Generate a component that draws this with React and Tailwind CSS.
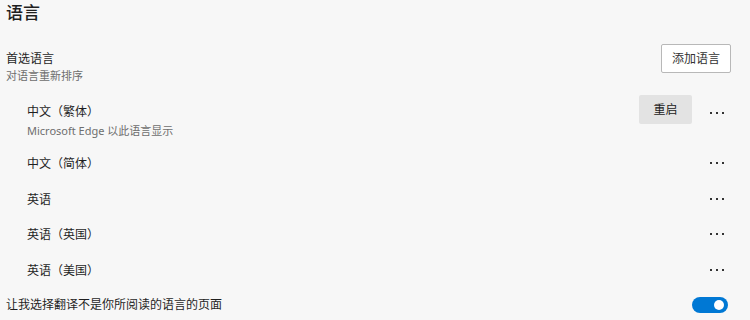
const FONT = "font-['Noto_Sans','Noto_Sans_CJK_SC',sans-serif]"

const LANGS = [
  { name: '中文（繁体）', sub: 'Microsoft Edge 以此语言显示', restart: true },
  { name: '中文（简体）' },
  { name: '英语' },
  { name: '英语（英国）' },
  { name: '英语（美国）' },
]

function Dots() {
  return (
    <button className="w-[30px] h-[20px] flex items-center justify-center gap-[4px]">
      <span className="w-[2px] h-[2px] bg-[#333]" />
      <span className="w-[2px] h-[2px] bg-[#333]" />
      <span className="w-[2px] h-[2px] bg-[#333]" />
    </button>
  )
}

export default function App() {
  return (
    <div className={`w-[750px] h-[320px] bg-[#f7f7f7] overflow-hidden text-[#1f1f1f] ${FONT}`}>
      <div className="pl-[6px] pr-[19px]">
        <h1 className="text-[17px] leading-[24px] pt-[1px] font-medium">语言</h1>

        <div className="flex items-start justify-between mt-[19px]">
          <div>
            <p className="text-[12px] leading-[18px] pt-[6px]">首选语言</p>
            <p className="text-[11px] leading-[16px] text-[#6e6e6e]">对语言重新排序</p>
          </div>
          <button className="w-[70px] h-[29px] bg-white border border-[#b8b8b8] rounded-[2px] text-[12px] text-[#333]">
            添加语言
          </button>
        </div>

        <div className="pl-[21px] mt-[17px]">
          {LANGS.map(l => (
            <div key={l.name} className={`flex items-start justify-between ${l.sub ? 'h-[52px]' : 'h-[35.5px]'}`}>
              <div>
                <p className="text-[12px] leading-[18px] pt-[2px]">{l.name}</p>
                {l.sub && <p className="text-[11px] leading-[16px] text-[#6e6e6e] mt-[2px]">{l.sub}</p>}
              </div>
              <div className="flex items-center gap-[10px] -mr-[1px]">
                {l.restart && (
                  <button className="w-[53px] h-[29px] bg-[#e3e3e3] rounded-[2px] text-[12px] text-[#222] -mt-[6px]">重启</button>
                )}
                <Dots />
              </div>
            </div>
          ))}
        </div>

        <div className="flex items-center justify-between mt-[1px]">
          <p className="text-[12px] leading-[18px]">让我选择翻译不是你所阅读的语言的页面</p>
          <button className="w-[36px] h-[16px] rounded-full bg-[#0078d4] flex items-center justify-end pr-[4px] mr-[3px]">
            <span className="w-[10px] h-[10px] rounded-full bg-white" />
          </button>
        </div>
      </div>
    </div>
  )
}
